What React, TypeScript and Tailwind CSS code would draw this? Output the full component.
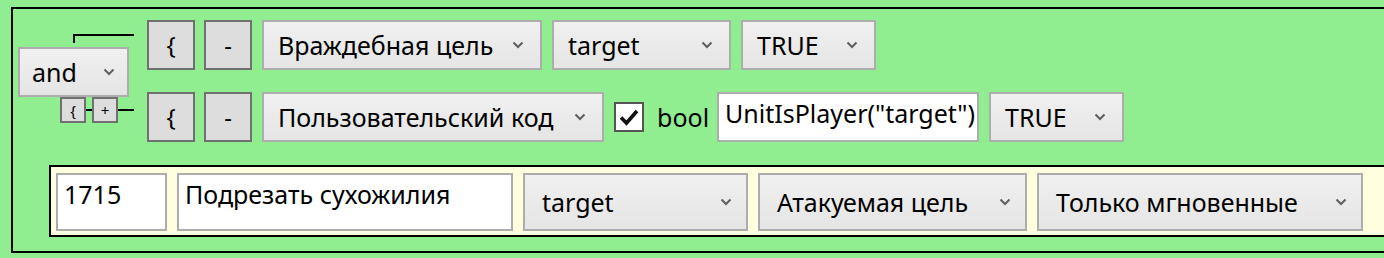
import React from "react";

const font = { fontFamily: '"Noto Sans", "Open Sans", sans-serif' };

function Chevron() {
  return (
    <svg width="12" height="8" viewBox="0 0 12 8" className="shrink-0">
      <polyline points="1.5,1.5 6,6 10.5,1.5" fill="none" stroke="#5f5f5f" strokeWidth="2" />
    </svg>
  );
}

function Select({ label, w, h = "h-[50px]", px = "pl-[14px] pr-[16px]" }: any) {
  return (
    <div
      className={`${w} ${h} ${px} shrink-0 flex items-center justify-between border-2 border-[#adadad] bg-gradient-to-b from-[#f0f0f0] to-[#e5e5e5] text-[25px] text-black`}
    >
      <span className="whitespace-nowrap leading-none">{label}</span>
      <Chevron />
    </div>
  );
}

function Btn({ label }: any) {
  return (
    <div className="w-[48px] h-[50px] shrink-0 flex items-center justify-center border-2 border-[#707070] bg-[#dddddd] text-[24px] text-black leading-none">
      {label}
    </div>
  );
}

function SmallBtn({ label }: any) {
  return (
    <div className="w-[26px] h-[26px] shrink-0 flex items-center justify-center border-2 border-[#707070] bg-[#dddddd] text-[15px] text-black leading-none">
      {label}
    </div>
  );
}

function TextBox({ value, w, h = "h-[50px]", pt = "pt-[8px]" }: any) {
  return (
    <div className={`${w} ${h} ${pt} shrink-0 border-2 border-[#adadad] bg-white pl-[6px] text-[25px] text-black leading-none whitespace-nowrap`}>
      {value}
    </div>
  );
}

export default function App() {
  return (
    <div className="w-full h-[258px] overflow-hidden bg-[#90ee90]" style={font}>
      <div className="ml-[11px] mt-[7px] w-[1420px] h-[246px] border-2 border-black">
        <div className="flex">
          {/* and / or block */}
          <div className="w-[134px] shrink-0 flex flex-col">
            <div className="ml-[60px] mt-[25px] w-[61px] h-[9px] border-t-2 border-l-2 border-black" />
            <div className="ml-[5px] mt-[4px]">
              <Select label="and" w="w-[111px]" px="pl-[12px] pr-[12px]" />
            </div>
            <div className="ml-[47px] flex items-center">
              <SmallBtn label="{" />
              <div className="w-[6px] h-[2px] bg-black" />
              <SmallBtn label="+" />
              <div className="w-[16px] h-[2px] bg-black" />
            </div>
          </div>

          <div className="pt-[11px] flex flex-col gap-[22px]">
            <div className="flex items-center">
              <Btn label="{" />
              <div className="ml-[9px]">
                <Btn label="-" />
              </div>
              <div className="ml-[10px] flex gap-[10px]">
                <Select label="Враждебная цель" w="w-[280px]" />
                <Select label="target" w="w-[179px]" />
                <Select label="TRUE" w="w-[135px]" />
              </div>
            </div>
            <div className="flex items-center">
              <Btn label="{" />
              <div className="ml-[9px]">
                <Btn label="-" />
              </div>
              <div className="ml-[10px]">
                <Select label="Пользовательский код" w="w-[342px]" />
              </div>
              <div className="ml-[10px] w-[30px] h-[30px] shrink-0 border-2 border-[#555555] bg-white flex items-center justify-center">
                <svg width="22" height="20" viewBox="0 0 22 20">
                  <path d="M3 10.5 L8.5 16 L19 4" fill="none" stroke="#111" strokeWidth="3.6" />
                </svg>
              </div>
              <span className="ml-[13px] text-[25px] leading-none text-black">bool</span>
              <div className="ml-[8px]">
                <TextBox value={'UnitIsPlayer("target")'} w="w-[262px]" pt="pt-[7px]" />
              </div>
              <div className="ml-[10px]">
                <Select label="TRUE" w="w-[135px]" />
              </div>
            </div>
          </div>
        </div>

        <div className="ml-[36px] mt-[23px] h-[72px] border-2 border-black bg-[#ffffe0] pl-[5px] pt-[6px] flex">
          <div className="flex gap-[10px] items-start">
            <TextBox value="1715" w="w-[111px]" h="h-[58px]" pt="pt-[7px]" />
            <TextBox value="Подрезать сухожилия" w="w-[336px]" h="h-[58px]" pt="pt-[7px]" />
            <Select label="target" w="w-[225px]" h="h-[58px]" px="pl-[17px] pr-[14px]" />
            <Select label="Атакуемая цель" w="w-[269px]" h="h-[58px]" px="pl-[17px] pr-[14px]" />
            <Select label="Только мгновенные" w="w-[326px]" h="h-[58px]" px="pl-[17px] pr-[14px]" />
          </div>
        </div>
      </div>
    </div>
  );
}
